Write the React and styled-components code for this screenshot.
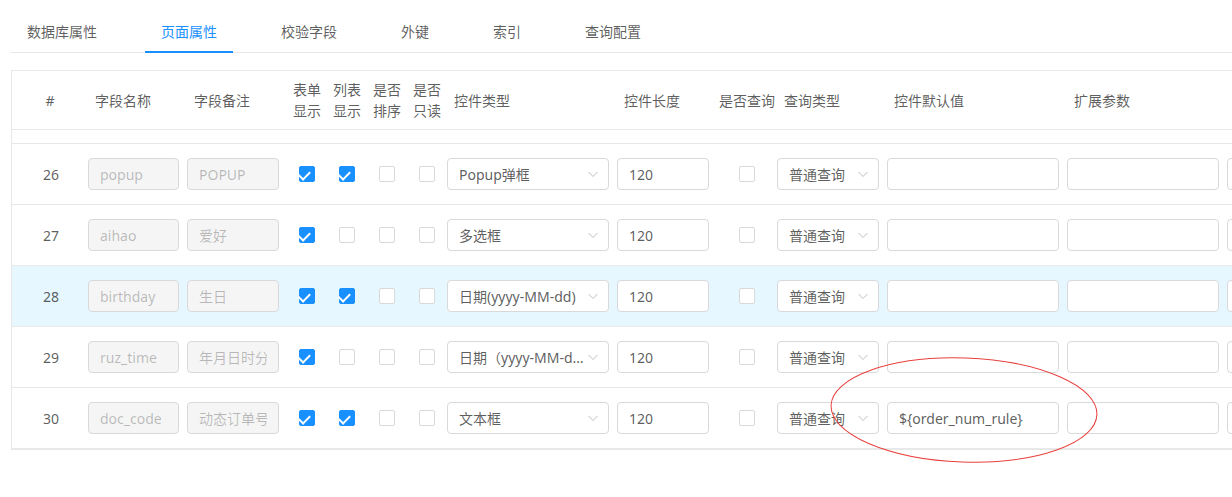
import React from 'react'
import styled, { createGlobalStyle } from 'styled-components'

const GlobalStyle = createGlobalStyle`
  html, body { margin: 0; padding: 0; background: #fff; overflow: hidden; }
  body {
    font-family: "Noto Sans", "Noto Sans CJK SC", sans-serif;
    font-size: 14px;
    color: rgba(0, 0, 0, 0.65);
  }
  * { box-sizing: border-box; }
`

const COLS = '76px 99px 100px 40px 40px 40px 40px 170px 100px 60px 110px 180px 160px 160px'

const Page = styled.div`
  position: relative;
  width: 1232px;
  height: 497px;
  padding-left: 11px;
  overflow: hidden;
`

const TabBar = styled.div`
  display: flex;
  align-items: flex-end;
  height: 53px;
  margin-left: -1px;
  padding-left: 1px;
  border-bottom: 1px solid #e8e8e8;
`

const Tab = styled.div`
  position: relative;
  padding: 11px 16px 9px;
  margin-right: 32px;
  line-height: 22px;
  white-space: nowrap;
  color: ${p => (p.$active ? '#1890ff' : 'rgba(0, 0, 0, 0.65)')};
  &::after {
    content: '';
    display: ${p => (p.$active ? 'block' : 'none')};
    position: absolute;
    left: 0;
    right: 0;
    bottom: -1px;
    height: 2px;
    background: #1890ff;
  }
`

const Card = styled.div`
  margin-top: 17px;
  width: 1400px;
  border: 1px solid #e8e8e8;
  border-right: none;
`

const HeadRow = styled.div`
  display: grid;
  grid-template-columns: ${COLS};
  height: 59px;
  border-bottom: 1px solid #e8e8e8;
  align-items: center;
`

const HeadCell = styled.div`
  text-align: ${p => (p.$center ? 'center' : 'left')};
  line-height: 21px;
  padding-right: ${p => (p.$wrap ? '5px' : '0')};
  padding-left: ${p => (p.$wrap ? '5px' : p.$center ? '0' : '7px')};
  color: rgba(0, 0, 0, 0.65);
  white-space: ${p => (p.$wrap ? 'normal' : 'nowrap')};
`

const Strip = styled.div`
  height: 14px;
  border-bottom: 1px solid #e8e8e8;
`

const Row = styled.div`
  display: grid;
  grid-template-columns: ${COLS};
  height: 61px;
  align-items: center;
  border-bottom: 1px solid #e8e8e8;
  background: ${p => (p.$highlight ? '#e6f7ff' : '#fff')};
`

const Cell = styled.div`
  display: flex;
  align-items: center;
  justify-content: ${p => (p.$center ? 'center' : 'flex-start')};
`

const Num = styled.span`
  color: rgba(0, 0, 0, 0.65);
  margin-left: 2px;
`

const Input = styled.input`
  width: ${p => p.$w}px;
  height: 32px;
  padding: 0 11px;
  border: 1px solid #d9d9d9;
  border-radius: 4px;
  font: inherit;
  font-size: 14px;
  color: rgba(0, 0, 0, 0.65);
  background: #fff;
  outline: none;
  &:disabled {
    background: #f5f5f5;
    color: rgba(0, 0, 0, 0.25);
  }
`

const SelectBox = styled.div`
  display: flex;
  align-items: center;
  width: ${p => p.$w}px;
  height: 32px;
  padding: 0 9px 0 11px;
  border: 1px solid #d9d9d9;
  border-radius: 4px;
  background: #fff;
`

const SelectText = styled.span`
  flex: 1;
  min-width: 0;
  overflow: hidden;
  white-space: nowrap;
  text-overflow: ellipsis;
  color: rgba(0, 0, 0, 0.65);
`

const Arrow = styled.svg`
  flex: none;
  width: 12px;
  height: 12px;
  margin-left: 3px;
`

const Box = styled.span`
  position: relative;
  display: inline-block;
  width: 16px;
  height: 16px;
  border-radius: 2px;
  border: 1px solid ${p => (p.$checked ? '#1890ff' : '#d9d9d9')};
  background: ${p => (p.$checked ? '#1890ff' : '#fff')};
  &::after {
    content: '';
    display: ${p => (p.$checked ? 'block' : 'none')};
    position: absolute;
    left: 3.6px;
    top: 6.6px;
    width: 5.7px;
    height: 9.1px;
    border: 2px solid #fff;
    border-top: 0;
    border-left: 0;
    transform: rotate(45deg) translate(-50%, -50%);
    transform-origin: 0 0;
  }
`

const Mark = styled.svg`
  position: absolute;
  left: 0;
  top: 0;
  pointer-events: none;
`

const Select = ({ w, value }) => (
  <SelectBox $w={w}>
    <SelectText>{value}</SelectText>
    <Arrow viewBox="0 0 12 12">
      <polyline points="1.5,4 6,8.5 10.5,4" fill="none" stroke="#bfbfbf" strokeWidth="1" />
    </Arrow>
  </SelectBox>
)

const tabs = ['数据库属性', '页面属性', '校验字段', '外键', '索引', '查询配置']

const rows = [
  { n: 26, name: 'popup', remark: 'POPUP', cb: [1, 1, 0, 0], type: 'Popup弹框', def: '' },
  { n: 27, name: 'aihao', remark: '爱好', cb: [1, 0, 0, 0], type: '多选框', def: '' },
  { n: 28, name: 'birthday', remark: '生日', cb: [1, 1, 0, 0], type: '日期(yyyy-MM-dd)', def: '', hl: true },
  { n: 29, name: 'ruz_time', remark: '年月日时分', cb: [1, 0, 0, 0], type: '日期（yyyy-MM-dd HH:mm）', def: '' },
  { n: 30, name: 'doc_code', remark: '动态订单号', cb: [1, 1, 0, 0], type: '文本框', def: '${order_num_rule}' },
]

export default function App() {
  return (
    <Page>
      <GlobalStyle />
      <TabBar>
        {tabs.map((t, i) => (
          <Tab key={t} $active={i === 1}>{t}</Tab>
        ))}
      </TabBar>
      <Card>
        <HeadRow>
          <HeadCell $center>#</HeadCell>
          <HeadCell>字段名称</HeadCell>
          <HeadCell>字段备注</HeadCell>
          <HeadCell $center $wrap>表单显示</HeadCell>
          <HeadCell $center $wrap>列表显示</HeadCell>
          <HeadCell $center $wrap>是否排序</HeadCell>
          <HeadCell $center $wrap>是否只读</HeadCell>
          <HeadCell>控件类型</HeadCell>
          <HeadCell>控件长度</HeadCell>
          <HeadCell $center>是否查询</HeadCell>
          <HeadCell>查询类型</HeadCell>
          <HeadCell>控件默认值</HeadCell>
          <HeadCell>扩展参数</HeadCell>
          <HeadCell />
        </HeadRow>
        <Strip />
        {rows.map(r => (
          <Row key={r.n} $highlight={r.hl}>
            <Cell $center><Num>{r.n}</Num></Cell>
            <Cell><Input $w={91} disabled defaultValue={r.name} /></Cell>
            <Cell><Input $w={92} disabled defaultValue={r.remark} /></Cell>
            {r.cb.map((c, i) => (
              <Cell key={i} $center><Box $checked={!!c} /></Cell>
            ))}
            <Cell><Select w={162} value={r.type} /></Cell>
            <Cell><Input $w={92} readOnly defaultValue="120" /></Cell>
            <Cell $center><Box /></Cell>
            <Cell><Select w={102} value="普通查询" /></Cell>
            <Cell><Input $w={172} readOnly defaultValue={r.def} /></Cell>
            <Cell><Input $w={152} readOnly defaultValue="" /></Cell>
            <Cell><Input $w={152} readOnly defaultValue="" /></Cell>
          </Row>
        ))}
      </Card>
      <Mark width="1232" height="497">
        <ellipse cx="964" cy="410" rx="133" ry="52" fill="none" stroke="#e8403c" strokeWidth="1" transform="rotate(2 964 410)" />
      </Mark>
    </Page>
  )
}
